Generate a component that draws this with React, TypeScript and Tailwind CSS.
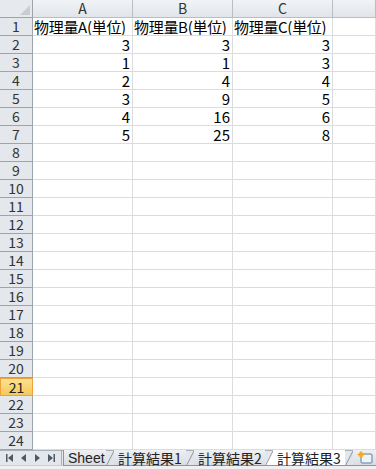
import React from "react";

const font = '"MS PGothic", "Noto Sans CJK JP", "Liberation Sans", sans-serif';

const rows: (string | number)[][] = [
  ["物理量A(単位)", "物理量B(単位)", "物理量C(単位)"],
  [3, 3, 3],
  [1, 1, 3],
  [2, 4, 4],
  [3, 9, 5],
  [4, 16, 6],
  [5, 25, 8],
];

const cols = ["A", "B", "C", ""];

function Slant({ active }: { active?: boolean }) {
  return (
    <svg width="9" height="16" viewBox="0 0 9 16" className="shrink-0 -mr-[1px]">
      <polygon points="0,15 8,0 9,0 9,16 0,16" fill={active ? "#ffffff" : "#e1e5ea"} />
      <line x1="0.5" y1="15.5" x2="8.5" y2="0" stroke="#8e969f" strokeWidth="1" />
      <line x1="0" y1="15.5" x2="9" y2="15.5" stroke="#8e969f" strokeWidth="1" />
    </svg>
  );
}

function Tab({ label, active, w }: { label: string; active?: boolean; w: string }) {
  return (
    <div className="flex items-stretch h-[16px] shrink-0">
      <Slant active={active} />
      <div
        className={`${w} flex items-center pl-[4px] text-[14px] leading-[16px] whitespace-nowrap text-[#222] border-b border-[#8e969f] ${
          active ? "bg-white" : "bg-gradient-to-b from-[#eef0f3] to-[#d9dde2]"
        }`}
      >
        {label}
      </div>
    </div>
  );
}

export default function App() {
  return (
    <div className="w-[376px] h-[469px] overflow-hidden bg-white select-none" style={{ fontFamily: font }}>
      <div className="grid grid-cols-[33px_100px_100px_100px_1fr] auto-rows-[18px]">
        {/* corner */}
        <div className="relative bg-[#e6e9ed] border-r border-b border-[#9ea4ab]">
          <svg width="10" height="10" className="absolute right-[2px] bottom-[2px]">
            <polygon points="10,0 10,10 0,10" fill="#c9cdd2" />
          </svg>
        </div>
        {cols.map((c, i) => (
          <div
            key={i}
            className="flex items-center justify-center bg-gradient-to-b from-[#f1f3f6] to-[#e1e5ea] border-r border-b border-[#b9bec4] text-[14px] text-[#333] leading-[17px]"
          >
            {c}
          </div>
        ))}
        {Array.from({ length: 24 }).map((_, r) => {
          const data = rows[r];
          const active = r === 20;
          return (
            <React.Fragment key={r}>
              <div
                className={`flex items-center justify-center text-[14px] leading-[17px] ${
                  active
                    ? "bg-gradient-to-b from-[#fbe28f] to-[#f5c85a] border border-[#f0a13c] text-[#222]"
                    : "bg-[#e4e7eb] border-r border-b border-[#9ea4ab] text-[#333]"
                }`}
              >
                {r + 1}
              </div>
              {[0, 1, 2, 3].map((c) => {
                const v = data ? data[c] : undefined;
                return (
                  <div
                    key={c}
                    className={`flex items-center border-r border-b border-[#dadcdd] text-[15px] leading-[17px] text-black whitespace-nowrap overflow-hidden ${
                      typeof v === "number" ? "justify-end pr-[2px]" : "justify-start pl-[1px] tracking-[-0.3px]"
                    }`}
                  >
                    {v ?? ""}
                  </div>
                );
              })}
            </React.Fragment>
          );
        })}
      </div>

      {/* sheet tabs */}
      <div className="h-[15px] bg-[#e3e7ec] border-t border-[#a9b0b7] flex items-start">
        <div className="w-[62px] shrink-0 h-full flex items-center justify-around px-[2px] text-[#4d5964] border-r border-[#a9b0b7]">
          <svg width="8" height="8" viewBox="0 0 8 8"><rect x="0" y="0" width="1.5" height="8" fill="currentColor" /><polygon points="7,0 7,8 2,4" fill="currentColor" /></svg>
          <svg width="6" height="8" viewBox="0 0 6 8"><polygon points="5,0 5,8 0,4" fill="currentColor" /></svg>
          <svg width="6" height="8" viewBox="0 0 6 8"><polygon points="1,0 1,8 6,4" fill="currentColor" /></svg>
          <svg width="8" height="8" viewBox="0 0 8 8"><polygon points="1,0 1,8 6,4" fill="currentColor" /><rect x="6.5" y="0" width="1.5" height="8" fill="currentColor" /></svg>
        </div>
        <div className="flex -mt-[1px] shrink-0">
          <div className="w-[1px]" />
          <div className="flex items-stretch h-[16px] shrink-0">
            <div
              className="w-[43px] flex items-center pl-[4px] text-[14px] leading-[16px] whitespace-nowrap text-[#222] border-l border-b border-[#8e969f] bg-gradient-to-b from-[#eef0f3] to-[#d9dde2]"
              style={{ fontFamily: '"Liberation Sans", sans-serif' }}
            >
              Sheet
            </div>
          </div>
          <Tab label="計算結果1" w="w-[72px]" />
          <Tab label="計算結果2" w="w-[71px]" />
          <Tab label="計算結果3" w="w-[72px]" active />
          <Slant />
          <div className="w-[24px] shrink-0 h-[16px] flex items-center justify-center border-b border-[#8e969f] bg-gradient-to-b from-[#eef0f3] to-[#d9dde2]">
            <svg width="16" height="13" viewBox="0 0 16 13">
              <rect x="4" y="3" width="11" height="9" rx="1" fill="#eef3f8" stroke="#5a7fa8" />
              <circle cx="4" cy="3.5" r="2.6" fill="#f7b52c" />
              <path d="M4 0v7M0.5 3.5h7" stroke="#f3a21a" strokeWidth="1" />
            </svg>
          </div>
        </div>
      </div>
      <div className="h-[4px] bg-[#eef0f3] border-t border-[#c9ced4]" />
    </div>
  );
}
